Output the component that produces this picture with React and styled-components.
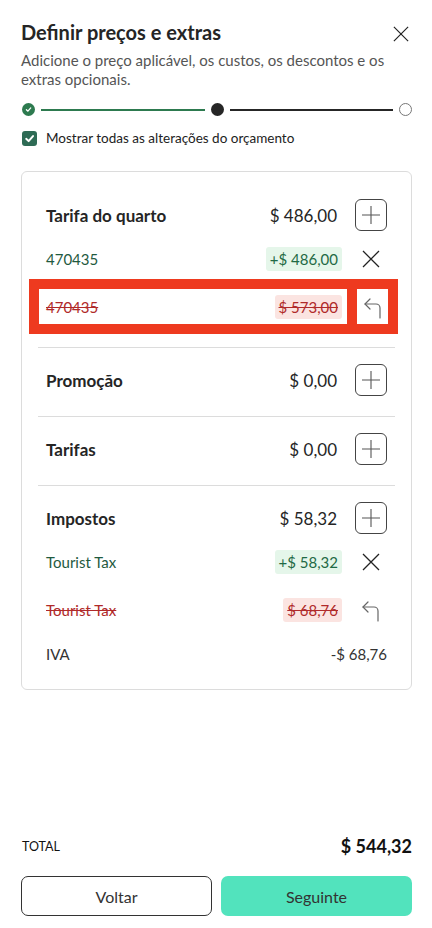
import styled, { createGlobalStyle } from 'styled-components';

const GlobalStyle = createGlobalStyle`
  html, body {
    margin: 0;
    padding: 0;
    background: #ffffff;
  }
  body {
    font-family: 'Lato', 'Noto Sans', sans-serif;
    color: #222222;
  }
  * {
    box-sizing: border-box;
  }
`;

const Page = styled.div`
  display: flex;
  flex-direction: column;
  height: 928px;
  padding: 20px 20px 12px 21px;
`;

const Header = styled.div`
  display: flex;
  align-items: flex-start;
  justify-content: space-between;
`;

const Title = styled.h1`
  margin: 0;
  font-size: 20px;
  line-height: 24px;
  font-weight: 700;
  color: #252525;
`;

const CloseButton = styled.button`
  display: flex;
  align-items: center;
  justify-content: center;
  width: 24px;
  height: 24px;
  margin: 2px -1px 0 0;
  padding: 0;
  border: none;
  background: none;
  color: #222;
  cursor: pointer;
`;

const Subtitle = styled.p`
  margin: 5px 0 0 0;
  font-size: 15px;
  line-height: 19px;
  color: #555555;
  padding-right: 8px;
`;

const Stepper = styled.div`
  display: flex;
  align-items: center;
  gap: 6px;
  margin: 14px 0 0 1px;
`;

const Step = styled.span`
  display: flex;
  align-items: center;
  justify-content: center;
  flex: none;
  width: 13px;
  height: 13px;
  border-radius: 50%;
  background: ${(p) => (p.$state === 'done' ? '#2d7a4f' : p.$state === 'current' ? '#262626' : '#fff')};
  border: ${(p) => (p.$state === 'todo' ? '1.5px solid #777' : 'none')};
`;

const StepLine = styled.span`
  flex: 1;
  height: 2px;
  background: ${(p) => (p.$done ? '#2d7a4f' : '#262626')};
`;

const CheckRow = styled.label`
  display: flex;
  align-items: center;
  gap: 9px;
  margin-top: 14px;
  margin-left: 1px;
  font-size: 13.5px;
  color: #222;
`;

const CheckBox = styled.span`
  display: flex;
  align-items: center;
  justify-content: center;
  width: 15px;
  height: 15px;
  border-radius: 3px;
  background: #2e6b55;
`;

const Card = styled.div`
  margin-top: 25px;
  border: 1px solid #dcdcdc;
  border-radius: 6px;
  padding: 11px 16px 0;
`;

const Section = styled.div`
  padding: 16px 8px;
  border-top: ${(p) => (p.$first ? 'none' : '1px solid #dcdcdc')};
  &:last-child {
    padding-bottom: 15px;
  }
`;

const SectionHead = styled.div`
  display: grid;
  grid-template-columns: 1fr auto 32px;
  align-items: center;
  column-gap: 13px;
  height: 32px;
  margin-bottom: 4px;
`;

const SectionTitle = styled.span`
  font-size: 17px;
  font-weight: 700;
  color: #252525;
`;

const SectionAmount = styled.span`
  font-size: 17px;
  color: #252525;
  padding-right: 5px;
`;

const PlusButton = styled.button`
  display: flex;
  align-items: center;
  justify-content: center;
  width: 32px;
  height: 32px;
  padding: 0;
  border: 1px solid #444;
  border-radius: 6px;
  background: #fff;
  color: #555;
  cursor: pointer;
`;

const ItemRow = styled.div`
  display: grid;
  grid-template-columns: 1fr auto 32px;
  align-items: center;
  column-gap: 13px;
  height: 48px;
`;

const Highlight = styled.div`
  display: flex;
  gap: 10px;
  height: 55px;
  margin: -4px -11px -3px -17px;
  padding: 10px;
  background: #ee3a1f;
`;

const HighlightMain = styled.div`
  flex: 1;
  display: flex;
  align-items: center;
  justify-content: space-between;
  padding: 0 5px 0 7px;
  background: #fff;
`;

const HighlightAction = styled.div`
  display: flex;
  align-items: center;
  justify-content: center;
  width: 31px;
  background: #fff;
`;

const ItemLabel = styled.span`
  font-size: 15px;
  color: ${(p) => (p.$removed ? '#b02a2a' : '#1f5a3f')};
  text-decoration: ${(p) => (p.$removed ? 'line-through' : 'none')};
`;

const Badge = styled.span`
  justify-self: end;
  padding: 2px 4px;
  border-radius: 3px;
  font-size: 15px;
  line-height: 20px;
  color: ${(p) => (p.$removed ? '#b02a2a' : '#1f6a45')};
  background: ${(p) => (p.$removed ? '#fbe4e1' : '#e5f6ea')};
  text-decoration: ${(p) => (p.$removed ? 'line-through' : 'none')};
`;

const IconButton = styled.button`
  display: flex;
  align-items: center;
  justify-content: center;
  width: 32px;
  height: 32px;
  padding: 0;
  border: none;
  background: none;
  color: ${(p) => (p.$muted ? '#666' : '#222')};
  cursor: pointer;
`;

const PlainRow = styled.div`
  display: flex;
  align-items: center;
  justify-content: space-between;
  height: 40px;
  font-size: 15px;
  color: #333;
`;

const Footer = styled.div`
  margin-top: auto;
`;

const TotalRow = styled.div`
  display: flex;
  align-items: center;
  justify-content: space-between;
  padding-left: 1px;
`;

const TotalLabel = styled.span`
  font-size: 12.5px;
  color: #111;
`;

const TotalValue = styled.span`
  font-size: 18px;
  font-weight: 700;
  color: #111;
`;

const Buttons = styled.div`
  display: grid;
  grid-template-columns: 1fr 1fr;
  gap: 9px;
  margin-top: 19px;
`;

const FooterButton = styled.button`
  height: 40px;
  border-radius: 7px;
  font-family: inherit;
  font-size: 16px;
  color: #333;
  border: ${(p) => (p.$primary ? 'none' : '1px solid #333')};
  background: ${(p) => (p.$primary ? '#52e3bd' : '#fff')};
  cursor: pointer;
`;

const CrossIcon = ({ size = 18 }) => (
  <svg width={size} height={size} viewBox="0 0 18 18" fill="none" stroke="currentColor" strokeWidth="1.3">
    <path d="M1 1L17 17M17 1L1 17" />
  </svg>
);

const PlusIcon = () => (
  <svg width="20" height="20" viewBox="0 0 20 20" fill="none" stroke="currentColor" strokeWidth="1.1">
    <path d="M10 1V19M1 10H19" />
  </svg>
);

const UndoIcon = () => (
  <svg width="20" height="24" viewBox="0 0 20 24" fill="none" stroke="currentColor" strokeWidth="1.2" strokeLinecap="round" strokeLinejoin="round">
    <path d="M7 4L2 9L7 14" />
    <path d="M2 9H13A4 4 0 0 1 17 13V23" />
  </svg>
);

const SmallCheck = ({ size = 9 }) => (
  <svg width={size} height={size} viewBox="0 0 10 10" fill="none" stroke="#fff" strokeWidth="1.8" strokeLinecap="round" strokeLinejoin="round">
    <path d="M2 5.3L4.2 7.4L8.2 2.8" />
  </svg>
);

const sections = [
  {
    title: 'Tarifa do quarto',
    amount: '$ 486,00',
    items: [
      { label: '470435', value: '+$ 486,00' },
      { label: '470435', value: '$ 573,00', removed: true, highlight: true },
    ],
  },
  { title: 'Promoção', amount: '$ 0,00', items: [] },
  { title: 'Tarifas', amount: '$ 0,00', items: [] },
  {
    title: 'Impostos',
    amount: '$ 58,32',
    items: [
      { label: 'Tourist Tax', value: '+$ 58,32' },
      { label: 'Tourist Tax', value: '$ 68,76', removed: true },
    ],
    extra: { label: 'IVA', value: '-$ 68,76' },
  },
];

function Item({ item }) {
  if (item.highlight) {
    return (
      <Highlight>
        <HighlightMain>
          <ItemLabel $removed>{item.label}</ItemLabel>
          <Badge $removed>{item.value}</Badge>
        </HighlightMain>
        <HighlightAction>
          <IconButton $muted type="button">
            <UndoIcon />
          </IconButton>
        </HighlightAction>
      </Highlight>
    );
  }
  return (
    <ItemRow>
      <ItemLabel $removed={item.removed}>{item.label}</ItemLabel>
      <Badge $removed={item.removed}>{item.value}</Badge>
      <IconButton $muted={item.removed} type="button">
        {item.removed ? <UndoIcon /> : <CrossIcon />}
      </IconButton>
    </ItemRow>
  );
}

function App() {
  return (
    <>
      <GlobalStyle />
      <Page>
        <Header>
          <Title>Definir preços e extras</Title>
          <CloseButton type="button">
            <CrossIcon size={16} />
          </CloseButton>
        </Header>
        <Subtitle>Adicione o preço aplicável, os custos, os descontos e os extras opcionais.</Subtitle>
        <Stepper>
          <Step $state="done">
            <SmallCheck size={7} />
          </Step>
          <StepLine $done />
          <Step $state="current" />
          <StepLine />
          <Step $state="todo" />
        </Stepper>
        <CheckRow>
          <CheckBox>
            <SmallCheck size={11} />
          </CheckBox>
          Mostrar todas as alterações do orçamento
        </CheckRow>

        <Card>
          {sections.map((s, i) => (
            <Section key={s.title} $first={i === 0}>
              <SectionHead>
                <SectionTitle>{s.title}</SectionTitle>
                <SectionAmount>{s.amount}</SectionAmount>
                <PlusButton type="button">
                  <PlusIcon />
                </PlusButton>
              </SectionHead>
              {s.items.map((item, j) => (
                <Item key={j} item={item} />
              ))}
              {s.extra && (
                <PlainRow>
                  <span>{s.extra.label}</span>
                  <span>{s.extra.value}</span>
                </PlainRow>
              )}
            </Section>
          ))}
        </Card>

        <Footer>
          <TotalRow>
            <TotalLabel>TOTAL</TotalLabel>
            <TotalValue>$ 544,32</TotalValue>
          </TotalRow>
          <Buttons>
            <FooterButton type="button">Voltar</FooterButton>
            <FooterButton $primary type="button">Seguinte</FooterButton>
          </Buttons>
        </Footer>
      </Page>
    </>
  );
}

export default App;
